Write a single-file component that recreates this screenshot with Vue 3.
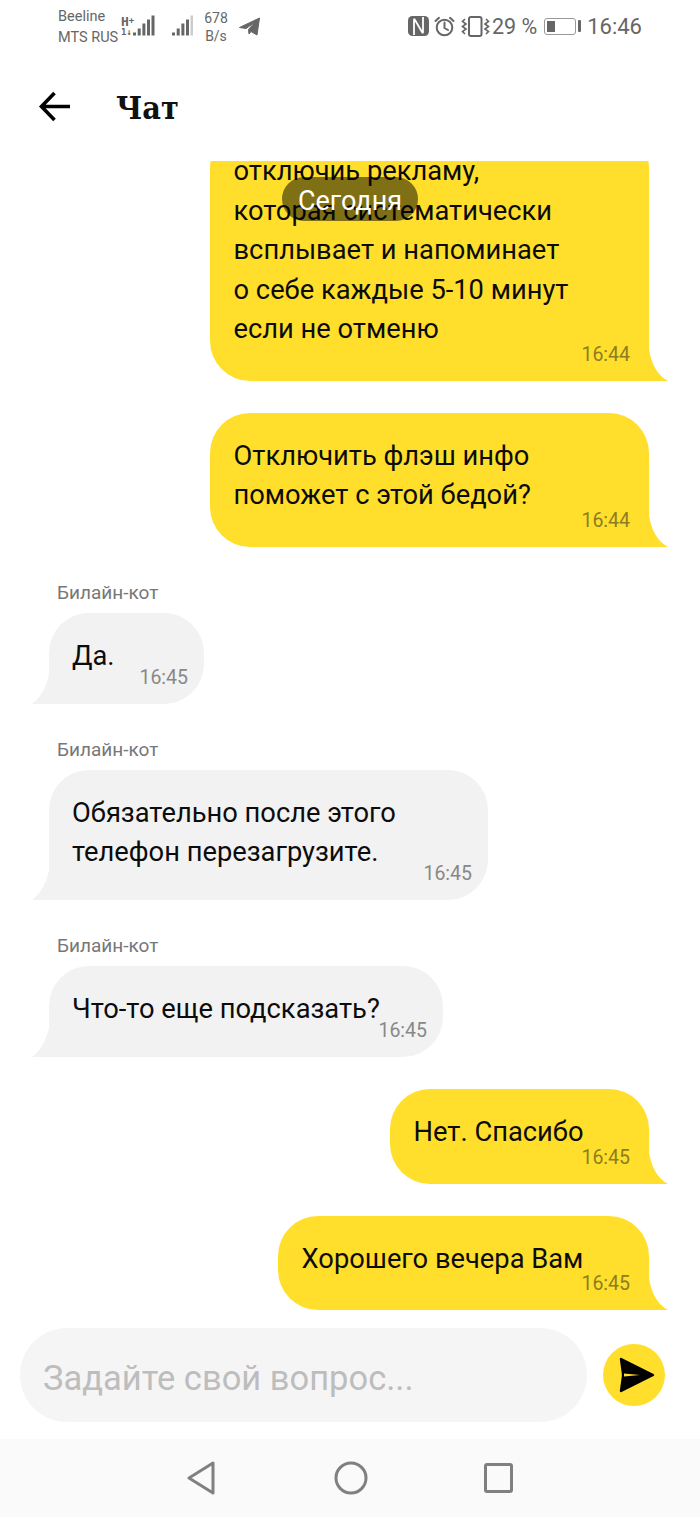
<template>
  <div class="phone">
    <header class="status">
      <div class="carriers">
        <span>Beeline</span>
        <span>MTS RUS</span>
      </div>
      <svg class="sig-a" width="34" height="22" viewBox="0 0 34 22">
        <text x="0" y="10.5" class="net">H<tspan class="net-small" dy="-3">+</tspan></text>
        <text x="0" y="20" class="net net-small">1↓</text>
        <rect v-for="b in bars" :key="b.x" :x="b.x + 11" :y="20.5 - b.h" width="3" :height="b.h" fill="#666" />
      </svg>
      <svg class="sig-b" width="22" height="22" viewBox="0 0 22 22">
        <rect v-for="(b, i) in bars" :key="b.x" :x="b.x" :y="20.5 - b.h" width="3" :height="b.h" :fill="i === 4 ? '#ccc' : '#666'" />
      </svg>
      <div class="speed">
        <span>678</span>
        <span>B/s</span>
      </div>
      <svg class="plane" width="21" height="19" viewBox="0 0 21 19">
        <path d="M0.5 10.5 L20.5 1 L18 18 L12 14.5 L10 17 L9.5 12.5 L16 5 L7 11.5 Z" fill="#666" stroke="#666" stroke-linejoin="round" />
      </svg>
      <div class="spacer"></div>
      <svg class="nfc" width="21" height="20" viewBox="0 0 21 20">
        <rect width="21" height="20" rx="4.5" fill="#666" />
        <path d="M6 19 V4 Q6 2.5 7 4 L14 16 Q15 17.5 15 16 V1" fill="none" stroke="#fff" stroke-width="1.8" />
      </svg>
      <svg class="alarm" width="21" height="21" viewBox="0 0 21 21" fill="none" stroke="#666" stroke-width="2">
        <circle cx="10.5" cy="11.5" r="7.8" />
        <path d="M10.5 6.5 V12 L14 14 M1.5 5 L5 1.8 M19.5 5 L16 1.8" stroke-linecap="round" />
      </svg>
      <svg class="vibrate" width="30" height="21" viewBox="0 0 30 21" fill="none" stroke="#666" stroke-width="1.6">
        <rect x="8" y="1" width="12.5" height="19" rx="2" stroke-width="2" />
        <path d="M4 3 L1.5 5.5 L5 8 L1.5 10.5 L5 13 L1.5 15.5 L4 18 M25 3 L27.5 5.5 L24 8 L27.5 10.5 L24 13 L27.5 15.5 L25 18" />
      </svg>
      <span class="pct">29 %</span>
      <div class="battery">
        <div class="battery-body"><div class="battery-fill"></div></div>
        <div class="battery-cap"></div>
      </div>
      <span class="clock">16:46</span>
    </header>

    <div class="appbar">
      <svg class="back" width="32" height="31" viewBox="0 0 32 31" fill="none" stroke="#000" stroke-width="3.6">
        <path d="M31 15.5 H3 M15.5 2 L2.5 15.5 L15.5 29" />
      </svg>
      <h1 class="title">Чат</h1>
    </div>

    <main class="chat">
      <div class="day">Сегодня</div>
      <div class="feed">
        <div v-for="m in messages" :key="m.text" class="msg" :class="m.mine ? 'mine' : 'bot'">
          <div v-if="!m.mine" class="author">Билайн-кот</div>
          <div class="bubble" :style="{ width: m.width + 'px' }">
            <div v-for="line in m.text.split('\n')" :key="line" class="line">{{ line }}</div>
            <span class="time">{{ m.time }}</span>
            <svg v-if="m.mine" class="tail tail-r" width="19" height="32" viewBox="0 0 19 32">
              <path d="M0 0 C2 14 8 26 19 32 H0 Z" />
            </svg>
            <svg v-else class="tail tail-l" width="18" height="35" viewBox="0 0 18 35">
              <path d="M18 0 C16 14 10 28 0 35 H18 Z" />
            </svg>
          </div>
        </div>
      </div>
    </main>

    <div class="composer">
      <div class="input">Задайте свой вопрос...</div>
      <div class="send">
        <svg width="36" height="36" viewBox="0 0 36 36">
          <path d="M2 2 L34 18 L2 34 L4 19.5 L4 16.5 Z" fill="#000" stroke="#000" stroke-width="2.4" stroke-linejoin="round" />
          <path d="M5 16.5 L21 18 L5 19.5 Z" fill="#ffdf2b" />
        </svg>
      </div>
    </div>

    <nav class="navbar">
      <svg width="28" height="34" viewBox="0 0 28 34" fill="none" stroke="#808080" stroke-width="3" stroke-linejoin="round">
        <path d="M26 2 V32 L2 17 Z" />
      </svg>
      <svg width="34" height="34" viewBox="0 0 34 34" fill="none" stroke="#808080" stroke-width="3">
        <circle cx="17" cy="17" r="15" />
      </svg>
      <svg class="nav-square" width="29" height="30" viewBox="0 0 29 30" fill="none" stroke="#808080" stroke-width="3" stroke-linejoin="round">
        <rect x="1.5" y="1.5" width="26" height="27" rx="1.5" />
      </svg>
    </nav>
  </div>
</template>

<script setup>
const bars = [
  { x: 1, h: 3 },
  { x: 5.7, h: 7 },
  { x: 10.4, h: 12 },
  { x: 15, h: 16 },
  { x: 19.5, h: 20 },
]

const messages = [
  {
    mine: true,
    width: 439,
    time: '16:44',
    text: 'отключиь рекламу,\nкоторая систематически\nвсплывает и напоминает\nо себе каждые 5-10 минут\nесли не отменю',
  },
  { mine: true, width: 439, time: '16:44', text: 'Отключить флэш инфо\nпоможет с этой бедой?' },
  { mine: false, width: 155, time: '16:45', text: 'Да.' },
  { mine: false, width: 439, time: '16:45', text: 'Обязательно после этого\nтелефон перезагрузите.' },
  { mine: false, width: 394, time: '16:45', text: 'Что-то еще подсказать?' },
  { mine: true, width: 259, time: '16:45', text: 'Нет. Спасибо' },
  { mine: true, width: 371, time: '16:45', text: 'Хорошего вечера Вам' },
]
</script>

<style>
html,
body {
  margin: 0;
  background: #fff;
}
</style>

<style scoped>
.phone {
  width: 700px;
  height: 1517px;
  display: flex;
  flex-direction: column;
  overflow: hidden;
  background: #fff;
  font-family: Roboto, "Liberation Sans", sans-serif;
}

.status {
  height: 52px;
  display: flex;
  align-items: center;
  padding: 0 58px;
  color: #666;
  box-sizing: border-box;
}

.carriers {
  width: 62px;
  display: flex;
  flex-direction: column;
  font-size: 14.5px;
  line-height: 21px;
  white-space: nowrap;
  margin-top: 1px;
}

.sig-a {
  margin-left: 1px;
}

.sig-b {
  margin-left: 16px;
}

.net {
  font-family: "DejaVu Sans Mono", monospace;
  font-size: 13px;
  font-weight: 700;
  fill: #666;
}

.net-small {
  font-size: 9px;
}

.speed {
  width: 26px;
  margin-left: 10px;
  margin-top: 2px;
  display: flex;
  flex-direction: column;
  align-items: center;
  font-size: 14px;
  line-height: 18px;
}

.plane {
  margin-left: 10px;
}

.spacer {
  flex: 1;
}

.nfc {
  margin-right: -1px;
}

.alarm {
  margin-left: 6px;
}

.vibrate {
  margin-left: 6px;
}

.pct {
  font-size: 21.5px;
  margin-left: 1px;
}

.battery {
  display: flex;
  align-items: center;
  margin-left: 7px;
}

.battery-body {
  width: 26px;
  height: 11px;
  border: 1px solid #999;
  border-radius: 3px;
  padding: 2px;
}

.battery-fill {
  width: 8px;
  height: 100%;
  background: #666;
}

.battery-cap {
  width: 3px;
  height: 12px;
  margin-left: 2px;
  border-radius: 1px;
  background: #666;
}

.clock {
  font-size: 22px;
  margin-left: 6px;
}

.appbar {
  height: 109px;
  display: flex;
  align-items: center;
  padding-left: 39px;
  box-sizing: border-box;
}

.back {
  display: block;
}

.title {
  margin: 3px 0 0 45px;
  font-family: "DejaVu Serif Condensed", "DejaVu Serif", serif;
  font-stretch: condensed;
  font-size: 32px;
  font-weight: 700;
  color: #111;
}

.chat {
  flex: 1;
  min-height: 0;
  position: relative;
  overflow: hidden;
  display: flex;
  flex-direction: column;
  justify-content: flex-end;
}

.day {
  position: absolute;
  z-index: 2;
  top: 16px;
  left: 282px;
  width: 136px;
  height: 44px;
  border-radius: 22px;
  background: rgba(0, 0, 0, 0.5);
  color: #fff;
  font-size: 27px;
  line-height: 48px;
  text-align: center;
}

.feed {
  display: flex;
  flex-direction: column;
  flex-shrink: 0;
  gap: 32px;
}

.msg {
  display: flex;
  flex-direction: column;
}

.mine {
  align-items: flex-end;
  padding-right: 51px;
}

.bot {
  align-items: flex-start;
  padding-left: 49px;
}

.author {
  margin: 2px 0 8px 8px;
  font-size: 19px;
  line-height: 24px;
  color: #777;
}

.bubble {
  position: relative;
  box-sizing: border-box;
  font-size: 27.3px;
  line-height: 39.5px;
  color: #0c0c0c;
}

.mine .bubble {
  padding: 24px 10px 31px 23.5px;
  background: #ffdf2b;
  border-radius: 40px 40px 0 40px;
}

.bot .bubble {
  padding: 24px 10px 27.5px 23px;
  background: #f2f2f2;
  border-radius: 40px 40px 40px 0;
}

.line {
  white-space: nowrap;
}

.time {
  position: absolute;
  bottom: 14px;
  font-size: 19.5px;
  line-height: 24px;
}

.mine .time {
  right: 19px;
  color: #8c7c22;
}

.bot .time {
  right: 16px;
  color: #888;
}

.tail {
  position: absolute;
  bottom: 0;
  display: block;
}

.tail-r {
  right: -18.5px;
  fill: #ffdf2b;
}

.tail-l {
  left: -17px;
  fill: #f2f2f2;
}

.composer {
  height: 129px;
  flex-shrink: 0;
  box-sizing: border-box;
  display: flex;
  align-items: center;
  gap: 16px;
  padding: 1px 35px 0 20px;
}

.input {
  flex: 1;
  height: 94px;
  border-radius: 47px;
  background: #f5f5f5;
  padding-left: 23px;
  color: #bdbdbd;
  font-size: 34.5px;
  line-height: 100px;
  white-space: nowrap;
}

.send {
  width: 62px;
  height: 62px;
  border-radius: 50%;
  background: #ffdf2b;
  display: flex;
  align-items: center;
  justify-content: center;
  box-sizing: border-box;
  padding-left: 5px;
}

.navbar {
  height: 78px;
  flex-shrink: 0;
  background: #fafafa;
  display: flex;
  align-items: center;
  gap: 119px;
  padding-left: 187px;
}

.nav-square {
  margin-left: -3px;
}
</style>
